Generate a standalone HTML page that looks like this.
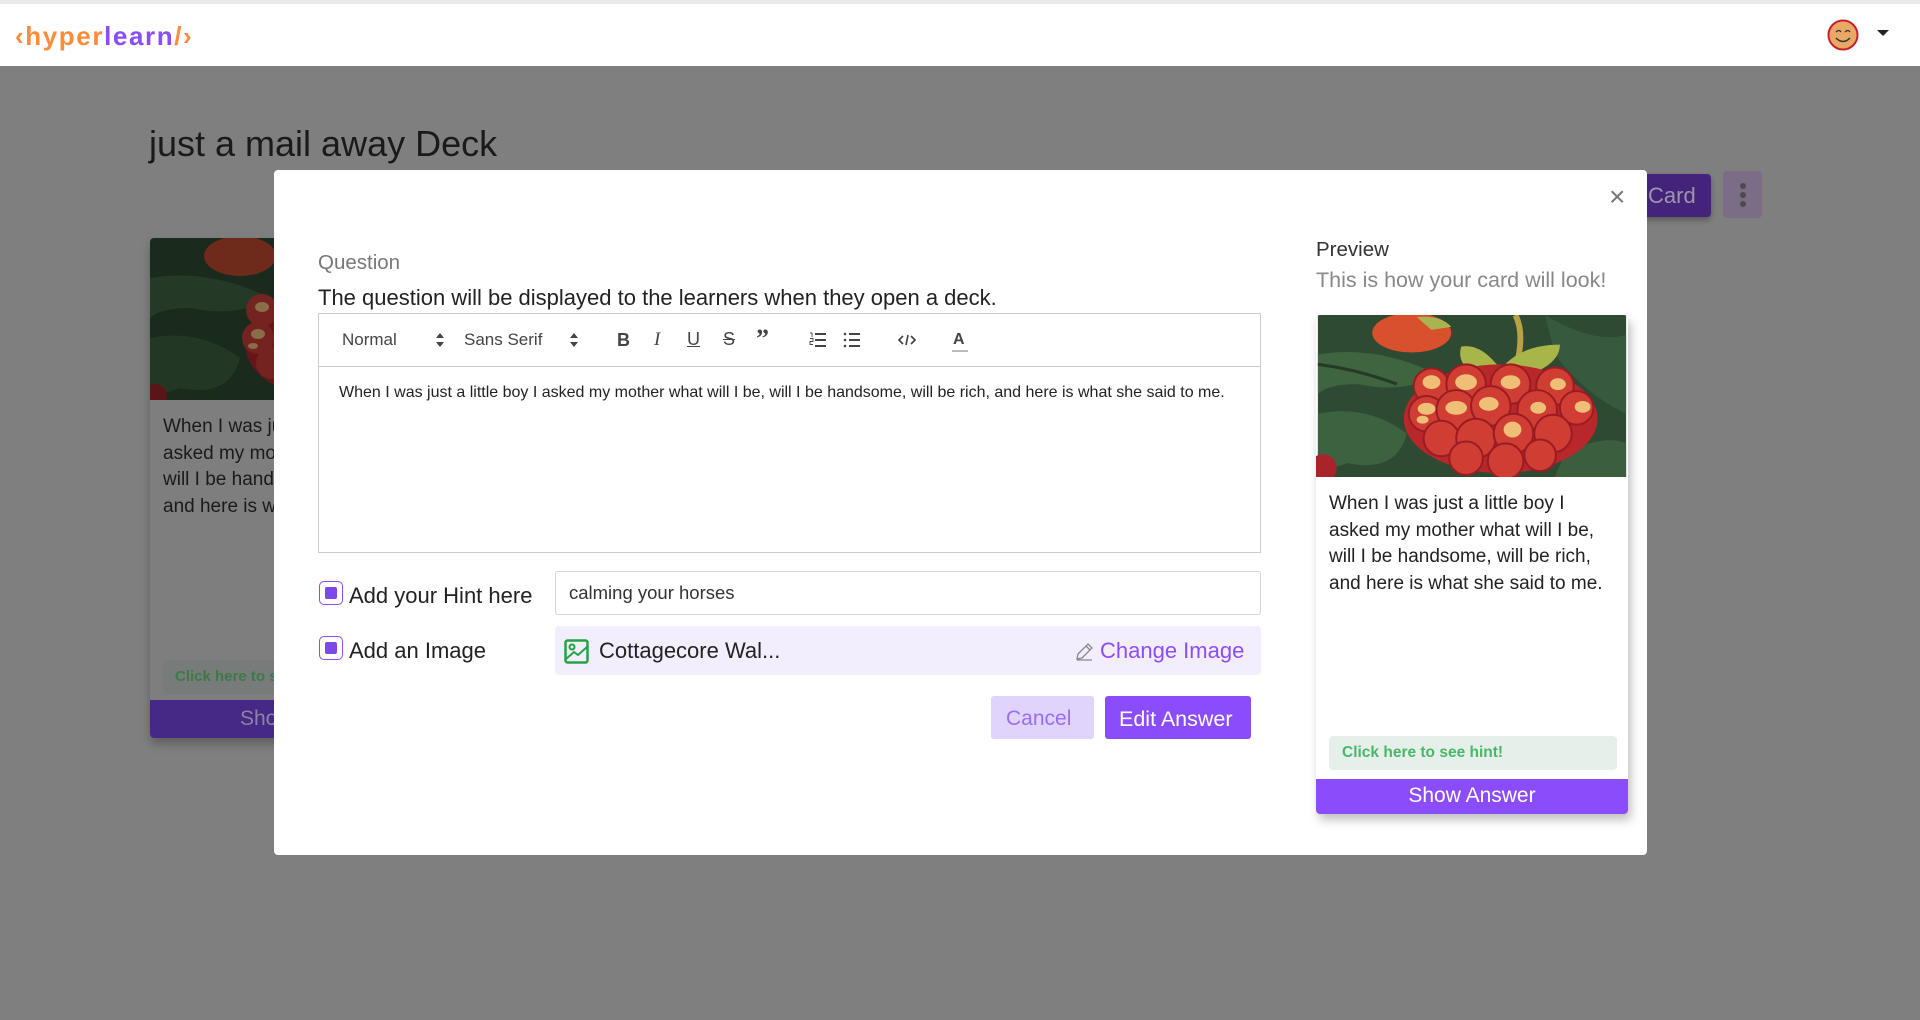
<!DOCTYPE html>
<html><head><meta charset="utf-8"><style>
*{box-sizing:border-box;margin:0;padding:0}
body{width:1920px;height:1020px;overflow:hidden;background:#7f7f80;font-family:"Liberation Sans",sans-serif;position:relative}
.a{position:absolute}
.t{white-space:nowrap}
</style></head><body>
<svg width="0" height="0" style="position:absolute"><defs>
<g id="berry">
<rect width="312" height="164" fill="#2f4a33"/>
<path d="M0 40 Q60 30 120 60 Q90 80 40 70 Q10 70 0 80Z" fill="#3f6440"/>
<path d="M0 100 Q50 90 90 120 Q80 160 30 150 L0 160Z" fill="#3d6240"/>
<path d="M0 50 Q40 55 80 70" stroke="#243a26" stroke-width="3" fill="none"/>
<path d="M230 0 Q280 30 312 20 L312 100 Q270 80 240 40Z" fill="#375a3e"/>
<path d="M250 140 Q290 120 312 130 L312 164 L240 164Z" fill="#3b5e3e"/>
<ellipse cx="95" cy="18" rx="40" ry="20" fill="#d9502c"/>
<path d="M100 2 Q125 0 135 12 L115 15Z" fill="#a9b451"/>
<path d="M200 0 Q210 20 200 55" stroke="#b9a244" stroke-width="6" fill="none"/>
<path d="M145 32 Q165 28 185 55 Q205 30 245 30 Q245 50 210 62 L160 60 Q140 50 145 32Z" fill="#a8b548"/>
<ellipse cx="185" cy="105" rx="98" ry="55" fill="#b8272a"/>
<g fill="#cf3d33" stroke="#9a1c22" stroke-width="2">
<circle cx="115" cy="72" r="18"/><circle cx="150" cy="70" r="20"/><circle cx="195" cy="70" r="20"/><circle cx="240" cy="72" r="19"/>
<circle cx="110" cy="100" r="18"/><circle cx="140" cy="96" r="20"/><circle cx="175" cy="92" r="20"/><circle cx="222" cy="96" r="20"/><circle cx="262" cy="94" r="17"/>
<circle cx="125" cy="125" r="18"/><circle cx="160" cy="125" r="20"/><circle cx="198" cy="120" r="20"/><circle cx="238" cy="120" r="19"/>
<circle cx="150" cy="145" r="17"/><circle cx="190" cy="148" r="18"/><circle cx="225" cy="142" r="16"/>
</g>
<g fill="#efbf78">
<ellipse cx="115" cy="68" rx="9" ry="7"/><ellipse cx="150" cy="68" rx="11" ry="8"/><ellipse cx="195" cy="68" rx="10" ry="7"/><ellipse cx="243" cy="70" rx="8" ry="6"/>
<ellipse cx="110" cy="95" rx="9" ry="6"/><ellipse cx="140" cy="94" rx="11" ry="7"/><ellipse cx="173" cy="90" rx="10" ry="7"/><ellipse cx="223" cy="94" rx="8" ry="6"/><ellipse cx="268" cy="93" rx="8" ry="6"/>
<ellipse cx="106" cy="106" rx="6" ry="4"/><ellipse cx="197" cy="116" rx="9" ry="8"/>
</g>
<circle cx="5" cy="155" r="14" fill="#a8242a"/>
</g>
</defs></svg>

<!-- header -->
<div class="a" style="left:0;top:0;width:1920px;height:4px;background:#e9e9e9"></div>
<div class="a" style="left:0;top:4px;width:1920px;height:62px;background:#fff"></div>
<div class="a t" style="left:15px;top:21px;font-size:26px;font-weight:bold;letter-spacing:1.6px;color:#fb8c3c">‹hyper<span style="color:#8b4dfb">learn</span><span style="color:#fb8c3c">/›</span></div>
<svg class="a" style="left:1827px;top:19px" width="32" height="32"><circle cx="16" cy="16" r="14.5" fill="#e9a866" stroke="#c8202a" stroke-width="2"/><path d="M9 13 q3-3 5 0 M18 13 q3-3 5 0" stroke="#333" stroke-width="1.3" fill="none"/><path d="M9 19 q7 7 14 0" stroke="#333" stroke-width="1.5" fill="none"/></svg>
<div class="a" style="left:1877px;top:30px;width:0;height:0;border-left:6px solid transparent;border-right:6px solid transparent;border-top:6px solid #222"></div>

<!-- background page -->
<div class="a t" style="left:149px;top:123px;font-size:36px;color:#1a1a1a">just a mail away Deck</div>
<div class="a" style="left:1600px;top:174px;width:111px;height:43px;background:#43247a;border-radius:4px;box-shadow:0 3px 6px rgba(0,0,0,.3)"></div>
<div class="a t" style="left:1648px;top:183px;font-size:22px;color:#9d95ad">Card</div>
<div class="a" style="left:1723px;top:171px;width:39px;height:47px;background:#7a6d85;border-radius:4px"></div>
<div class="a" style="left:1740px;top:183px;width:6px;height:6px;border-radius:3px;background:#4b4b4b;box-shadow:0 9px 0 #4b4b4b,0 18px 0 #4b4b4b"></div>

<div class="a" style="left:150px;top:238px;width:140px;height:500px;background:#7e7e7f;box-shadow:0 6px 10px rgba(0,0,0,.25);border-radius:4px;overflow:hidden">
  <svg width="140" height="162" style="position:absolute;left:0;top:0">
    <rect width="140" height="162" fill="#1a2a1c"/>
    <path d="M0 40 Q60 30 120 60 Q90 80 40 70 Q10 70 0 80Z" fill="#243a26"/>
    <path d="M0 100 Q50 90 90 120 Q80 160 30 150 L0 160Z" fill="#223824"/>
    <ellipse cx="90" cy="18" rx="36" ry="20" fill="#6e2a1a"/>
    <ellipse cx="175" cy="105" rx="80" ry="55" fill="#66161a"/>
    <g fill="#742420"><circle cx="112" cy="72" r="16"/><circle cx="108" cy="100" r="16"/><circle cx="122" cy="125" r="16"/></g>
    <g fill="#8a6e4a"><ellipse cx="112" cy="69" rx="7" ry="5"/><ellipse cx="108" cy="96" rx="7" ry="5"/><ellipse cx="103" cy="108" rx="5" ry="3"/></g>
    <circle cx="5" cy="158" r="12" fill="#5a1518"/>
  </svg>
  <div class="a" style="left:13px;top:176px;font-size:19px;line-height:26.5px;color:#1a1a1a;width:300px;white-space:nowrap">When I was just a little boy I<br>asked my mother what will I be,<br>will I be handsome, will be rich,<br>and here is what she said to me.</div>
  <div class="a" style="left:13px;top:422px;width:300px;height:34px;background:#777b79;border-radius:4px"></div>
  <div class="a t" style="left:25px;top:430px;font-size:15px;font-weight:bold;color:#3d7a47">Click here to see hint!</div>
  <div class="a" style="left:0;top:462px;width:312px;height:38px;background:#462887"></div>
  <div class="a t" style="left:90px;top:469px;font-size:21px;color:#8a85a0">Show Answer</div>
</div>

<!-- modal -->
<div class="a" style="left:274px;top:170px;width:1373px;height:685px;background:#fff;border-radius:4px"></div>
<div class="a t" style="left:1609px;top:181px;font-size:28px;color:#777">×</div>
<div class="a t" style="left:318px;top:251px;font-size:20.5px;color:#777">Question</div>
<div class="a t" style="left:318px;top:285px;font-size:22px;color:#222">The question will be displayed to the learners when they open a deck.</div>

<div class="a" style="left:318px;top:313px;width:943px;height:240px;border:1px solid #ccc"></div>
<div class="a" style="left:319px;top:366px;width:941px;height:1px;background:#ccc"></div>
<div class="a t" style="left:342px;top:330px;font-size:17px;color:#444">Normal</div>
<div class="a t" style="left:464px;top:330px;font-size:17px;color:#444">Sans Serif</div>
<svg class="a" style="left:435px;top:332px" width="10" height="16"><path d="M1 6 L5 1 L9 6Z M1 10 L5 15 L9 10Z" fill="#444"/></svg>
<svg class="a" style="left:569px;top:332px" width="10" height="16"><path d="M1 6 L5 1 L9 6Z M1 10 L5 15 L9 10Z" fill="#444"/></svg>
<div class="a t" style="left:617px;top:330px;font-size:18px;font-weight:bold;color:#444">B</div>
<div class="a t" style="left:654px;top:329px;font-size:19px;font-style:italic;color:#444;font-family:'Liberation Serif',serif">I</div>
<div class="a t" style="left:687px;top:329px;font-size:18px;color:#444;text-decoration:underline">U</div>
<div class="a t" style="left:723px;top:329px;font-size:18px;color:#444;text-decoration:line-through">S</div>
<div class="a t" style="left:756px;top:324px;font-size:26px;font-weight:bold;color:#444;font-family:'Liberation Serif',serif">”</div>
<svg class="a" style="left:809px;top:332px" width="18" height="16"><path d="M6 2h11M6 8h11M6 14h11" stroke="#444" stroke-width="2"/><path d="M1 1h2v4M1 6.5h3v3h-3v3h3" stroke="#444" stroke-width=".9" fill="none"/></svg>
<svg class="a" style="left:843px;top:332px" width="18" height="16"><path d="M6 2h11M6 8h11M6 14h11" stroke="#444" stroke-width="2"/><circle cx="2" cy="2" r="1.3" fill="#444"/><circle cx="2" cy="8" r="1.3" fill="#444"/><circle cx="2" cy="14" r="1.3" fill="#444"/></svg>
<svg class="a" style="left:898px;top:334px" width="18" height="12"><path d="M5 2 L1 6 L5 10 M13 2 L17 6 L13 10 M10 1 L8 11" stroke="#444" stroke-width="1.7" fill="none"/></svg>
<div class="a t" style="left:953px;top:331px;font-size:16px;font-weight:bold;color:#444">A</div>
<div class="a" style="left:952px;top:350px;width:16px;height:2px;background:#bbb"></div>
<div class="a t" style="left:339px;top:384px;font-size:16px;color:#222">When I was just a little boy I asked my mother what will I be, will I be handsome, will be rich, and here is what she said to me.</div>

<!-- hint row -->
<div class="a" style="left:319px;top:581px;width:24px;height:24px;border:1.5px solid #8b4dfb;border-radius:5px;background:#fff"></div>
<div class="a" style="left:325px;top:587px;width:12px;height:12px;background:#7c48e8;border-radius:2px"></div>
<div class="a t" style="left:349px;top:583px;font-size:22px;color:#222">Add your Hint here</div>
<div class="a" style="left:555px;top:571px;width:706px;height:44px;border:1px solid #d4d4d4;border-radius:3px"></div>
<div class="a t" style="left:569px;top:582px;font-size:18.5px;color:#333">calming your horses</div>

<!-- image row -->
<div class="a" style="left:319px;top:636px;width:24px;height:24px;border:1.5px solid #8b4dfb;border-radius:5px;background:#fff"></div>
<div class="a" style="left:325px;top:642px;width:12px;height:12px;background:#7c48e8;border-radius:2px"></div>
<div class="a t" style="left:349px;top:638px;font-size:22px;color:#222">Add an Image</div>
<div class="a" style="left:555px;top:626px;width:706px;height:49px;background:#f3eefd;border-radius:4px"></div>
<svg class="a" style="left:564px;top:639px" width="25" height="25"><rect x="1.5" y="1.5" width="22" height="22" rx="2" fill="none" stroke="#22a344" stroke-width="2.5"/><circle cx="8" cy="8" r="2.5" fill="none" stroke="#22a344" stroke-width="2"/><path d="M2 20 L10 13 L14 16 L23 8" stroke="#22a344" stroke-width="2" fill="none"/></svg>
<div class="a t" style="left:599px;top:638px;font-size:22px;color:#222">Cottagecore Wal...</div>
<svg class="a" style="left:1074px;top:642px" width="20" height="20"><path d="M3 17 L4 12 L14 2 L18 6 L8 16Z M12 4 L16 8 M3 18 H18" stroke="#888" stroke-width="1.3" fill="none"/></svg>
<div class="a t" style="left:1100px;top:638px;font-size:22px;color:#8b4dfb">Change Image</div>

<!-- buttons -->
<div class="a" style="left:991px;top:696px;width:103px;height:43px;background:#e1d4fc;border-radius:3px"></div>
<div class="a t" style="left:1006px;top:707px;font-size:21px;color:#9a6cf7">Cancel</div>
<div class="a" style="left:1105px;top:696px;width:146px;height:43px;background:#8b4dfb;border-radius:3px"></div>
<div class="a t" style="left:1119px;top:707px;font-size:21.5px;color:#fff">Edit Answer</div>

<!-- preview -->
<div class="a t" style="left:1316px;top:238px;font-size:20.5px;color:#333">Preview</div>
<div class="a t" style="left:1316px;top:268px;font-size:21.5px;color:#888">This is how your card will look!</div>
<div class="a" style="left:1316px;top:315px;width:312px;height:499px;background:#fff;box-shadow:3px 6px 10px rgba(0,0,0,.25);border-radius:4px;overflow:hidden">
  <svg width="312" height="164" viewBox="0 0 312 164" style="position:absolute;left:0;top:0;width:312px;height:162px"><use href="#berry"/></svg>
  <div class="a" style="left:13px;top:176px;font-size:19px;line-height:26.5px;color:#222;width:300px;white-space:nowrap">When I was just a little boy I<br>asked my mother what will I be,<br>will I be handsome, will be rich,<br>and here is what she said to me.</div>
  <div class="a" style="left:13px;top:421px;width:288px;height:34px;background:#e6efe9;border-radius:4px"></div>
  <div class="a t" style="left:26px;top:429px;font-size:15.5px;font-weight:bold;color:#46b866">Click here to see hint!</div>
  <div class="a" style="left:0;top:464px;width:312px;height:35px;background:#8b4dfb"></div>
  <div class="a t" style="left:0;top:469px;width:312px;text-align:center;font-size:21px;color:#fff">Show Answer</div>
</div>
</body></html>
